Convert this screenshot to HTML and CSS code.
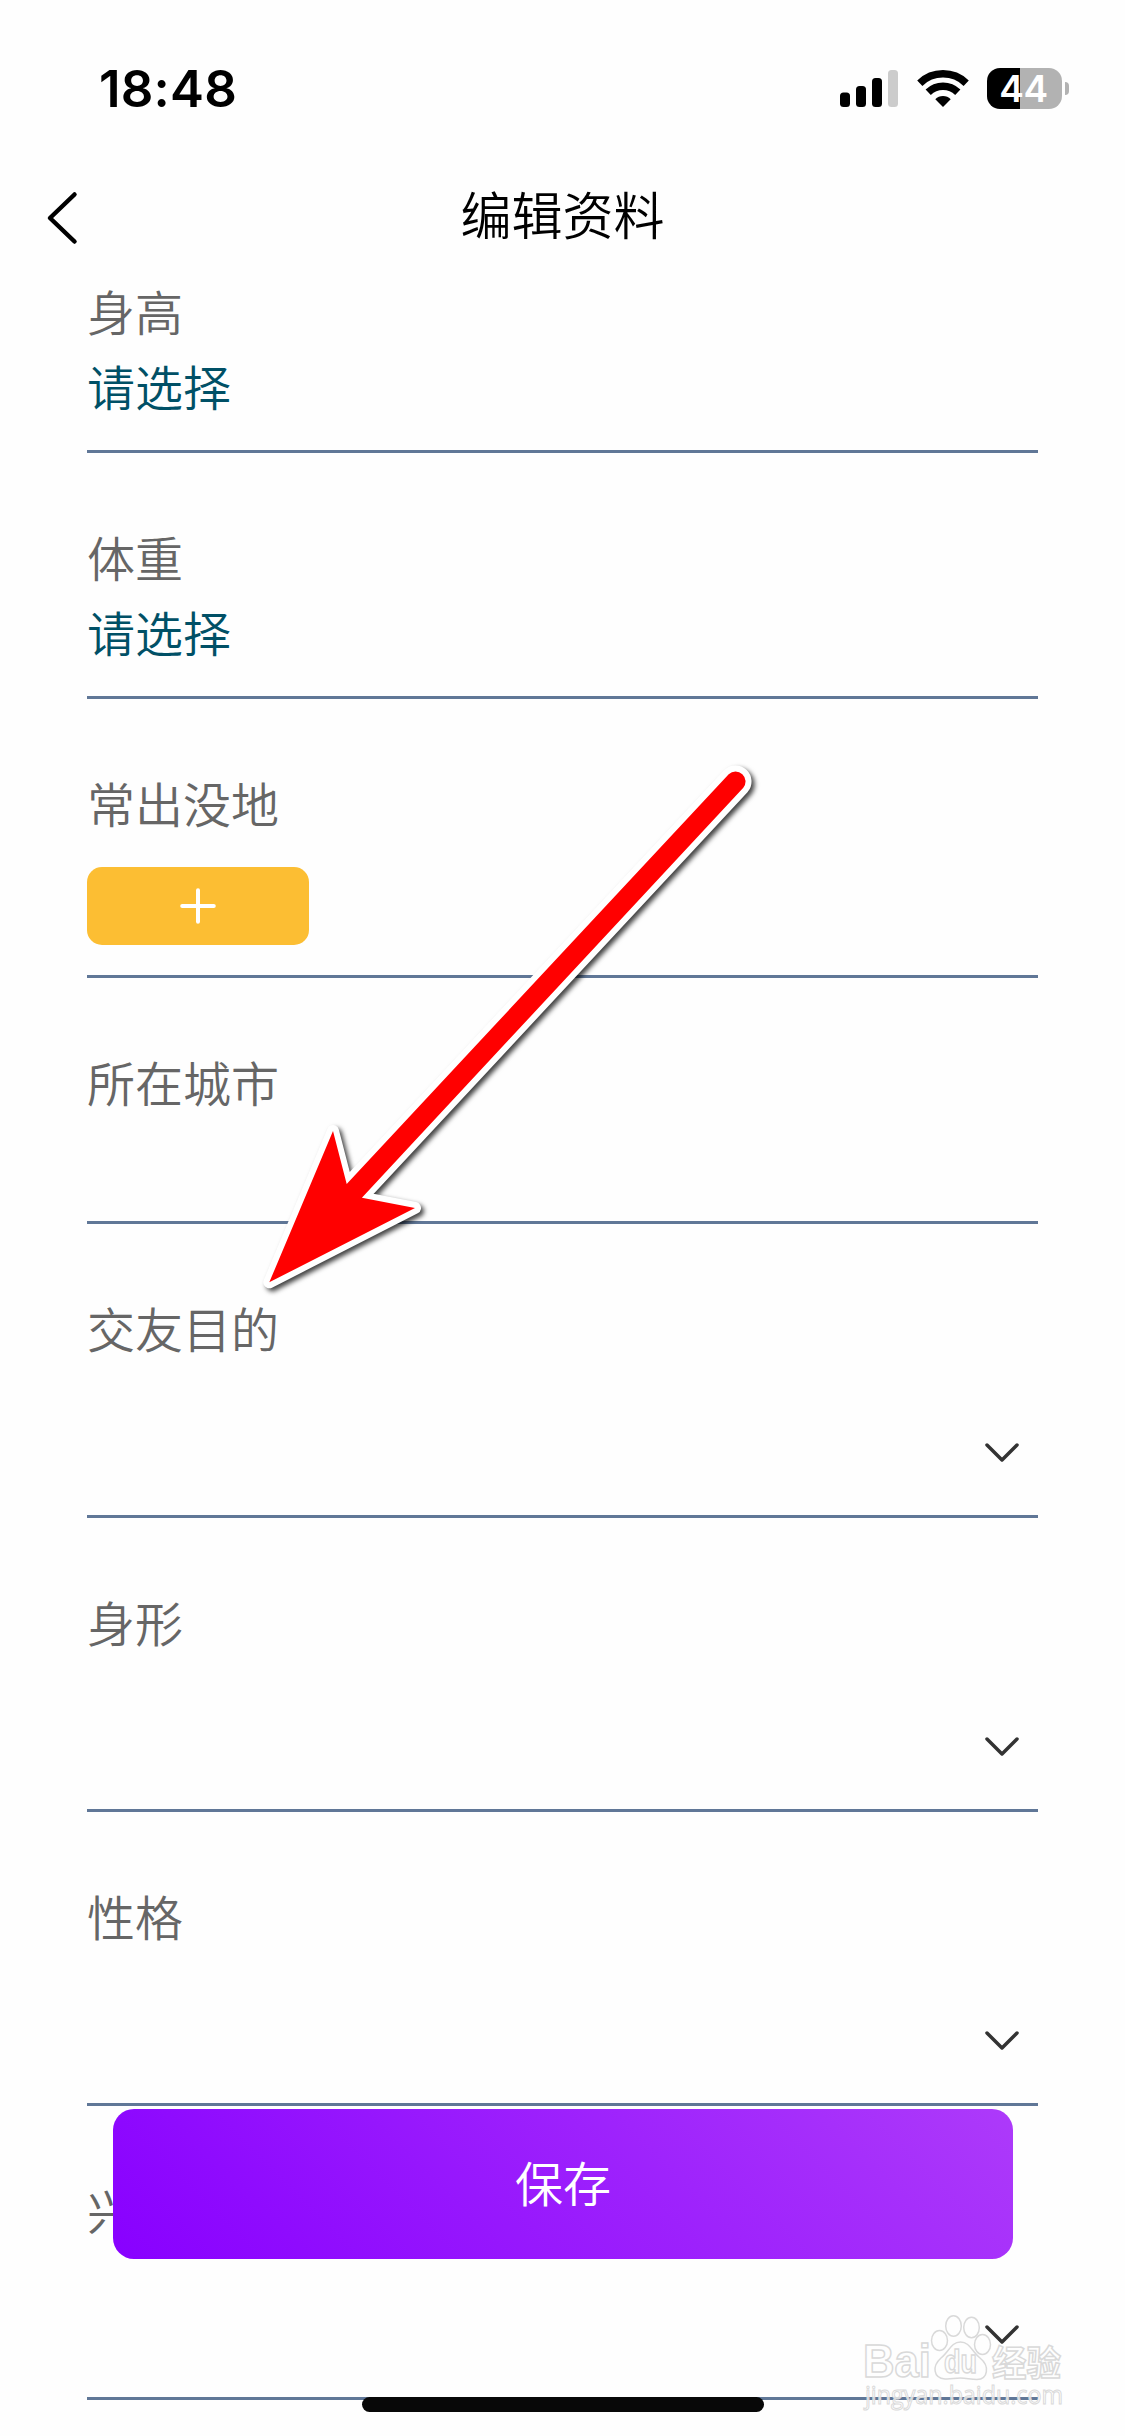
FILE: index.html
```html
<!DOCTYPE html>
<html lang="zh-CN">
<head>
<meta charset="utf-8">
<title>编辑资料</title>
<link rel="stylesheet" href="styles.css">
</head>
<body>
<div class="screen">
  <header class="status-bar">
    <span class="time">18:48</span>
    <div class="status-icons">
      <svg class="signal" width="58" height="41" viewBox="0 0 58 41">
        <rect x="0" y="24.5" width="10" height="14.5" rx="3.5"/>
        <rect x="16" y="18" width="10" height="21" rx="3.5"/>
        <rect x="32" y="10" width="10" height="29" rx="3.5"/>
        <rect x="48" y="2" width="10" height="37" rx="3.5" fill="#ccc"/>
      </svg>
      <svg class="wifi" width="52" height="41" viewBox="0 0 52 41" fill="none" stroke="#000">
        <path d="M2.8 15.2 A33.5 33.5 0 0 1 49.2 15.2" stroke-width="7.5"/>
        <path d="M11.2 24.2 A21.3 21.3 0 0 1 40.8 24.2" stroke-width="7.5"/>
        <path d="M26 39 L18.3 31.2 A11 11 0 0 1 33.7 31.2 Z" fill="#000" stroke="none"/>
      </svg>
      <div class="battery"><span>44</span></div>
      <i class="battery-tip"></i>
    </div>
  </header>
  <nav class="nav-bar">
    <svg class="back" width="34" height="56" viewBox="0 0 34 56"><path d="M29.5 4.5 L5 28 L29.5 51.5"/></svg>
    <h1>编辑资料</h1>
  </nav>
  <main class="form">
    <section class="field"><label>身高</label><span class="value">请选择</span></section>
    <section class="field"><label>体重</label><span class="value">请选择</span></section>
    <section class="field field-places"><label>常出没地</label>
      <button class="add"><svg width="36" height="36" viewBox="0 0 36 36"><path d="M18 2.2V33.8M2.2 18H33.8"/></svg></button>
    </section>
    <section class="field"><label>所在城市</label></section>
    <section class="field field-select"><label>交友目的</label><svg class="chevron" width="34" height="20" viewBox="0 0 34 20"><path d="M2 2 L17 17 L32 2"/></svg></section>
    <section class="field field-select"><label>身形</label><svg class="chevron" width="34" height="20" viewBox="0 0 34 20"><path d="M2 2 L17 17 L32 2"/></svg></section>
    <section class="field field-select"><label>性格</label><svg class="chevron" width="34" height="20" viewBox="0 0 34 20"><path d="M2 2 L17 17 L32 2"/></svg></section>
    <section class="field field-select"><label>兴趣</label><svg class="chevron" width="34" height="20" viewBox="0 0 34 20"><path d="M2 2 L17 17 L32 2"/></svg></section>
  </main>
  <button class="save">保存</button>
  <div class="home-indicator"></div>
  <svg class="arrow" width="520" height="560" viewBox="250 750 520 560">
    <path d="M269.3 1282.3 L333 1131 L346.7 1184 L728.7 774.2 A10 10 0 0 1 743.3 787.8 L361.9 1197.7 L415 1208 Z" fill="#fff" stroke="#fff" stroke-width="12" stroke-linejoin="round"/>
    <path d="M269.3 1282.3 L333 1131 L346.7 1184 L728.7 774.2 A10 10 0 0 1 743.3 787.8 L361.9 1197.7 L415 1208 Z" fill="#f00"/>
  </svg>
  <svg class="watermark" width="230" height="116" viewBox="0 0 230 116">
    <g class="mark">
      <text class="latin" x="11" y="67" textLength="68" lengthAdjust="spacingAndGlyphs">Bai</text>
      <ellipse cx="87.500" cy="30.500" rx="8" ry="10"/>
      <ellipse cx="101.500" cy="16" rx="7.8" ry="10.3"/>
      <ellipse cx="119.500" cy="17.5" rx="7.8" ry="10.3"/>
      <ellipse cx="130.500" cy="34.500" rx="8" ry="10"/>
      <path d="M108.500 32 C118 32 120 42 128 48 C138 56 136 69 125 69.500 C118 69.500 115 68 108.500 68 C102 68 99 69.500 93 69 C81 68 80 56 89 48 C97 42 99 32 108.500 32 Z"/>
      <text class="du" x="92" y="63" textLength="33" lengthAdjust="spacingAndGlyphs">du</text>
      <text class="han" x="140" y="65.500" textLength="69" lengthAdjust="spacingAndGlyphs">经验</text>
      <text class="url" x="13" y="94" textLength="198" lengthAdjust="spacingAndGlyphs">jingyan.baidu.com</text>
    </g>
  </svg>
</div>
</body>
</html>
```
FILE: styles.css
```css
* { box-sizing: border-box; }
body { margin: 0; background: #fefefe; }
button { border: 0; padding: 0; font: inherit; }

.screen {
  position: relative;
  width: 1125px;
  height: 2436px;
  overflow: hidden;
  background: #fefefe;
  font-family: "Noto Sans CJK SC DemiLight", "Noto Sans CJK SC", sans-serif;
  font-weight: 350;
}

.status-bar {
  display: flex;
  justify-content: space-between;
  align-items: center;
  height: 177px;
  padding: 0 56px 0 99px;
}
.time {
  font: 600 51px/60px Inter, sans-serif;
  letter-spacing: 0.2px;
}
.status-icons { display: flex; align-items: center; }
.wifi { margin: 0 18px 0 19px; }
.battery {
  width: 75px;
  height: 41px;
  padding-right: 2px;
  border-radius: 13px;
  background: linear-gradient(90deg, #000 33px, #b2b2b2 33px);
  color: #fff;
  font: 600 37px/41px Inter, sans-serif;
  letter-spacing: -0.5px;
  text-align: center;
}
.battery-tip {
  width: 4px;
  height: 13px;
  margin-left: 3px;
  border-radius: 0 4px 4px 0;
  background: #b2b2b2;
}

.nav-bar {
  display: grid;
  grid-template-columns: 80px 1fr 80px;
  align-items: center;
  height: 82px;
  padding: 0 45px;
}
.back path { fill: none; stroke: #000; stroke-width: 4.500; stroke-linecap: round; stroke-linejoin: round; }
h1 { margin: 0; padding-bottom: 10px; text-align: center; font-size: 51px; font-weight: 400; line-height: 72px; }

.form { display: flex; flex-direction: column; padding: 0 87px; margin-top: -52px; }
.field {
  display: flex;
  flex-direction: column;
  flex: none;
  height: 246px;
  padding-top: 67px;
  border-bottom: 3px solid #607797;
  font-size: 48px;
  line-height: 72px;
}
.field label { color: #666; }
.value { margin-top: 3px; color: #005066; }
.field-places { height: 279px; }
.add {
  display: grid;
  place-items: center;
  width: 222px;
  height: 78px;
  margin-top: 29px;
  border-radius: 15px;
  background: #fcbe33;
}
.add path { fill: none; stroke: #fff; stroke-width: 4; stroke-linecap: round; }
.field-select { height: 294px; }
.chevron { align-self: flex-end; margin: 80px 19px 0 0; }
.chevron path { fill: none; stroke: #333; stroke-width: 3.500; stroke-linecap: round; stroke-linejoin: round; }

.save {
  position: absolute;
  left: 113px;
  top: 2109px;
  width: 900px;
  height: 150px;
  padding-bottom: 6px;
  border-radius: 21px;
  background: linear-gradient(45deg, #8800ff, #ad3afa);
  color: #fff;
  font-size: 48px;
}
.home-indicator {
  position: absolute;
  left: 362px;
  top: 2397px;
  width: 402px;
  height: 15px;
  border-radius: 8px;
  background: #080808;
}
.arrow {
  position: absolute;
  left: 250px;
  top: 750px;
  overflow: visible;
  filter: drop-shadow(3px 3px 2.500px rgba(0, 0, 0, 0.75));
}
.watermark { position: absolute; left: 852px; top: 2310px; overflow: visible; }
.mark { fill: #fff; fill-opacity: 0.75; stroke: #d9d9d9; stroke-width: 1.500; }
.mark ellipse, .mark path { fill-opacity: 0; }
.latin { font: 700 46px "Liberation Sans", sans-serif; }
.du { font: 700 33px "Liberation Sans", sans-serif; }
.han { font: 700 35px "Noto Sans CJK SC", sans-serif; }
.url { font: 400 25px "Open Sans", sans-serif; stroke-width: 1; }
```
